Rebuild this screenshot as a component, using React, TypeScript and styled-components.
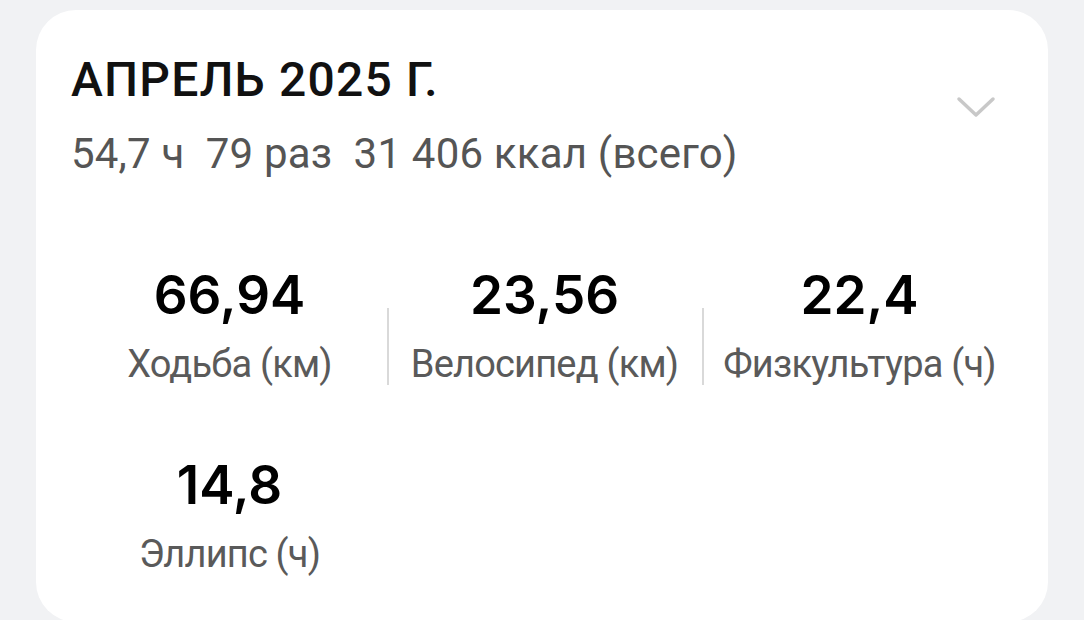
import React from "react";
import styled, { createGlobalStyle } from "styled-components";

const GlobalStyle = createGlobalStyle`
  html, body {
    margin: 0;
    padding: 0;
    background: #f1f2f4;
    font-family: Roboto, "Noto Sans", sans-serif;
  }
`;

const Page = styled.div`
  padding: 10px 36px 0 36px;
  height: 620px;
  box-sizing: border-box;
  overflow: hidden;
`;

const Card = styled.div`
  background: #ffffff;
  border-radius: 40px;
  padding: 42px 32px 50px 35px;
  box-sizing: border-box;
  height: 612px;
`;

const Header = styled.div`
  display: flex;
  justify-content: space-between;
  align-items: flex-start;
`;

const Title = styled.div`
  font-size: 48px;
  line-height: 56px;
  font-weight: 500;
  letter-spacing: 1.2px;
  color: #111;
`;

const Summary = styled.div`
  margin-top: 21px;
  font-size: 42px;
  line-height: 50px;
  letter-spacing: 0.2px;
  color: #555;
  white-space: pre;
`;

const Chevron = styled.svg`
  margin-top: 44px;
  margin-right: 20px;
  width: 40px;
  height: 22px;
`;

const Stats = styled.div`
  display: grid;
  grid-template-columns: repeat(3, 315px);
  row-gap: 66px;
  margin-top: 85px;
  margin-left: 1px;
`;

const Stat = styled.div<{ $divider?: boolean }>`
  position: relative;
  display: flex;
  flex-direction: column;
  align-items: center;

  &::before {
    content: "";
    display: ${(p) => (p.$divider ? "block" : "none")};
    position: absolute;
    left: 0;
    top: 44px;
    width: 2px;
    height: 77px;
    background: #d9d9d9;
  }
`;

const Value = styled.div`
  font-family: Inter, Roboto, sans-serif;
  font-size: 53px;
  line-height: 62px;
  font-weight: 600;
  color: #000;
`;

const Label = styled.div`
  margin-top: 14px;
  font-size: 38px;
  line-height: 48px;
  letter-spacing: -0.8px;
  color: #5a5a5a;
  white-space: nowrap;
`;

const stats = [
  { value: "66,94", label: "Ходьба (км)" },
  { value: "23,56", label: "Велосипед (км)" },
  { value: "22,4", label: "Физкультура (ч)" },
  { value: "14,8", label: "Эллипс (ч)" },
];

export default function App() {
  return (
    <>
      <GlobalStyle />
      <Page>
        <Card>
          <Header>
            <div>
              <Title>АПРЕЛЬ 2025 Г.</Title>
              <Summary>{"54,7 ч  79 раз  31 406 ккал (всего)"}</Summary>
            </div>
            <Chevron viewBox="0 0 40 22">
              <path
                d="M3 3 L20 19 L37 3"
                fill="none"
                stroke="#c8c8c8"
                strokeWidth="3.5"
                strokeLinecap="round"
                strokeLinejoin="round"
              />
            </Chevron>
          </Header>
          <Stats>
            {stats.map((s, i) => (
              <Stat key={s.label} $divider={i % 3 !== 0}>
                <Value>{s.value}</Value>
                <Label>{s.label}</Label>
              </Stat>
            ))}
          </Stats>
        </Card>
      </Page>
    </>
  );
}
